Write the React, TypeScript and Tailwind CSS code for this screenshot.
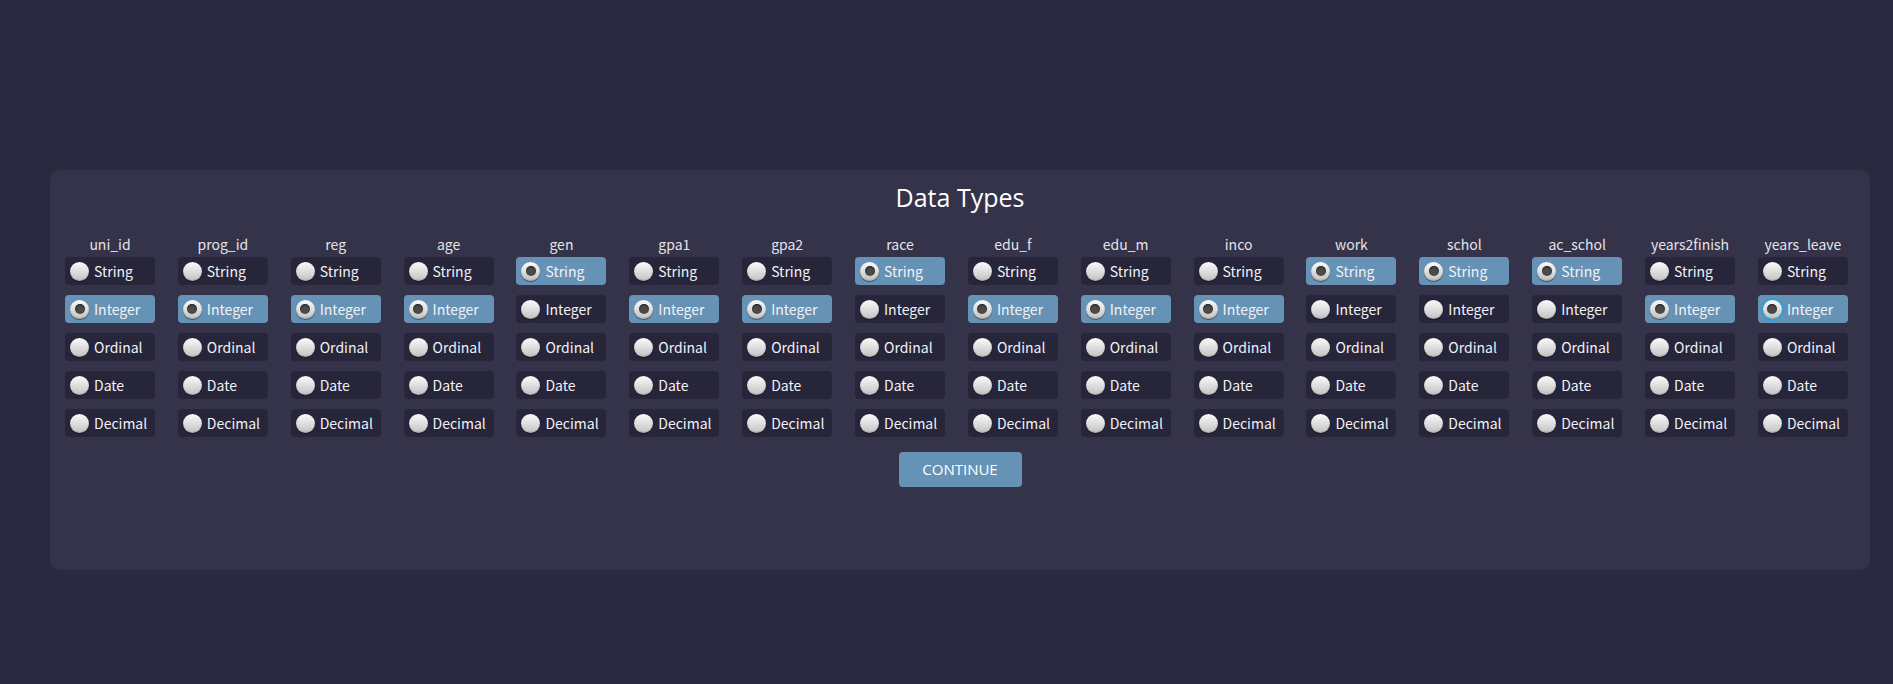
import React, { useState } from 'react';

const TYPES = ['String', 'Integer', 'Ordinal', 'Date', 'Decimal'];

const initialColumns: [string, string][] = [
  ['uni_id', 'Integer'],
  ['prog_id', 'Integer'],
  ['reg', 'Integer'],
  ['age', 'Integer'],
  ['gen', 'String'],
  ['gpa1', 'Integer'],
  ['gpa2', 'Integer'],
  ['race', 'String'],
  ['edu_f', 'Integer'],
  ['edu_m', 'Integer'],
  ['inco', 'Integer'],
  ['work', 'String'],
  ['schol', 'String'],
  ['ac_schol', 'String'],
  ['years2finish', 'Integer'],
  ['years_leave', 'Integer'],
];

const Radio = ({ checked, focused }: { checked: boolean; focused?: boolean }) => (
  <span
    className={`flex h-[19px] w-[19px] shrink-0 items-center justify-center rounded-full bg-gradient-to-b from-[#fbfbfb] to-[#c2c2c2] shadow-[0_1px_1px_rgba(0,0,0,0.45),inset_0_-1px_1px_rgba(0,0,0,0.15)] ${
      focused ? 'ring-2 ring-[#2d9fdc]' : ''
    }`}
  >
    {checked && (
      <span className="h-[10px] w-[10px] rounded-full bg-[#4b4b4b] shadow-[inset_0_1px_2px_rgba(0,0,0,0.6)]" />
    )}
  </span>
);

const App = () => {
  const [cols, setCols] = useState(initialColumns);

  const pick = (i: number, t: string) =>
    setCols((c) => c.map((col, j) => (j === i ? [col[0], t] : col)) as [string, string][]);

  return (
    <div className="min-h-[684px] w-full bg-[#2a2940] pl-[50px] pt-[170px]">
      <div className="flex h-[400px] w-[1820px] flex-col rounded-[10px] bg-[#343349] pt-[11px]">
        <h1 className="text-center font-['Open_Sans',sans-serif] text-[25px] font-medium leading-[32px] text-white">
          Data Types
        </h1>
        <div className="mt-[22px] flex gap-[22.87px] pl-[15px] font-['Noto_Sans_CJK_JP','Noto_Sans',sans-serif]">
          {cols.map(([name, type], i) => (
            <div key={name} className="flex w-[90px] flex-col">
              <div className="mb-[4px] text-center text-[14px] leading-[18px] text-[#e4e4ea]">{name}</div>
              <div className="flex flex-col gap-[10px]">
                {TYPES.map((t) => {
                  const on = t === type;
                  return (
                    <label
                      key={t}
                      onClick={() => pick(i, t)}
                      className={`flex h-[28px] cursor-pointer items-center gap-[5px] rounded-[4px] pl-[5px] text-[14px] text-[#f2f2f6] ${
                        on ? 'bg-[#6693b5]' : 'bg-[#27253a]'
                      }`}
                    >
                      <Radio checked={on} focused={on && name === 'years_leave'} />
                      <span>{t}</span>
                    </label>
                  );
                })}
              </div>
            </div>
          ))}
        </div>
        <div className="mt-[15px] flex justify-center">
          <button className="h-[35px] w-[123px] rounded-[4px] bg-[#6693b5] font-['Open_Sans',sans-serif] text-[15px] text-white">
            CONTINUE
          </button>
        </div>
      </div>
    </div>
  );
};

export default App;
